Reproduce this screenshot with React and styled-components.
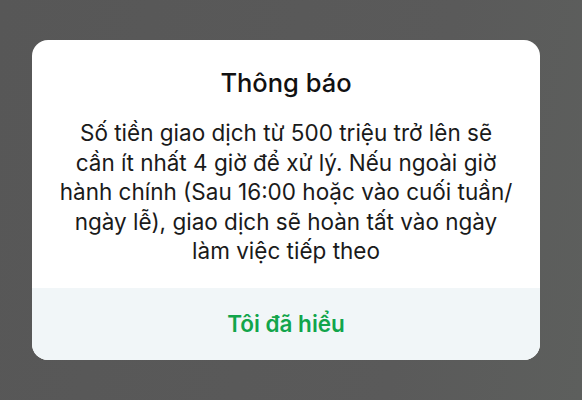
import React from "react";
import styled, { createGlobalStyle } from "styled-components";

const GlobalStyle = createGlobalStyle`
  html, body {
    margin: 0;
    padding: 0;
    height: 100%;
  }
  body {
    background: #5a5a5a;
    font-family: Inter, "Noto Sans", "Liberation Sans", sans-serif;
  }
  #root {
    height: 100%;
  }
`;

const Overlay = styled.div`
  height: 100%;
  display: flex;
  align-items: center;
  justify-content: center;
  background: linear-gradient(100deg, #575757 0%, #5a5a5a 70%, #5d5f5d 100%);
`;

const Dialog = styled.div`
  width: 508px;
  margin-right: 10px;
  background: #ffffff;
  border-radius: 16px;
  overflow: hidden;
  display: flex;
  flex-direction: column;
`;

const Content = styled.div`
  padding: 28px 16px 22px;
  display: flex;
  flex-direction: column;
  align-items: center;
  gap: 20px;
`;

const Title = styled.h2`
  margin: 0;
  font-size: 25.5px;
  line-height: 30px;
  font-weight: 500;
  color: #111;
`;

const Message = styled.p`
  margin: 0;
  font-size: 22.5px;
  line-height: 29.5px;
  color: #1a1a1a;
  text-align: center;
  white-space: nowrap;
`;

const Action = styled.button`
  height: 72px;
  border: none;
  background: #f1f6f8;
  color: #12a54b;
  font-family: inherit;
  font-size: 22.5px;
  font-weight: 600;
  cursor: pointer;
`;

const lines = [
  "Số tiền giao dịch từ 500 triệu trở lên sẽ",
  "cần ít nhất 4 giờ để xử lý. Nếu ngoài giờ",
  "hành chính (Sau 16:00 hoặc vào cuối tuần/",
  "ngày lễ), giao dịch sẽ hoàn tất vào ngày",
  "làm việc tiếp theo",
];

export default function App() {
  return (
    <>
      <GlobalStyle />
      <Overlay>
        <Dialog>
          <Content>
            <Title>Thông báo</Title>
            <Message>
              {lines.map((line, i) => (
                <React.Fragment key={i}>
                  {line}
                  {i < lines.length - 1 && <br />}
                </React.Fragment>
              ))}
            </Message>
          </Content>
          <Action>Tôi đã hiểu</Action>
        </Dialog>
      </Overlay>
    </>
  );
}
